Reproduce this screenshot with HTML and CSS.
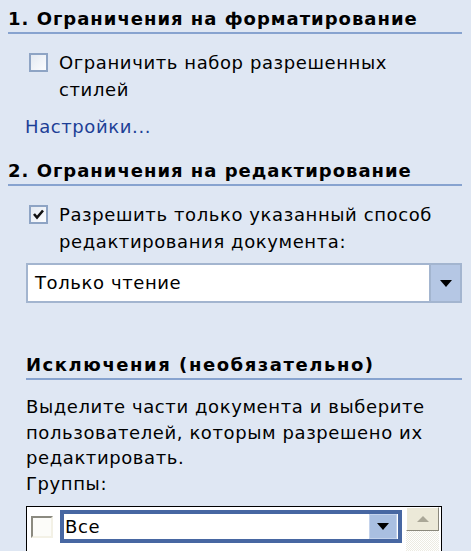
FILE: index.html
```html
<!DOCTYPE html>
<html lang="ru">
<head>
  <meta charset="UTF-8">
  <title>Ограничить форматирование и редактирование</title>
  <link rel="stylesheet" href="styles.css">
</head>
<body>
  <div class="pane">
    <h2 class="sect-title">1. Ограничения на форматирование</h2>
    <label class="check-row">
      <span class="cb"></span>
      <span class="cb-text">Ограничить набор разрешенных<br>стилей</span>
    </label>
    <a class="link" href="#">Настройки...</a>

    <h2 class="sect-title sect-two">2. Ограничения на редактирование</h2>
    <label class="check-row">
      <span class="cb">
        <svg width="13" height="11" viewBox="0 0 13 11"><path d="M2 5 L5 8.5 L11 1.5" fill="none" stroke="#111" stroke-width="2.6"/></svg>
      </span>
      <span class="cb-text">Разрешить только указанный способ<br>редактирования документа:</span>
    </label>
    <div class="select">
      <span class="select-value">Только чтение</span>
      <span class="select-btn">
        <svg width="12" height="7" viewBox="0 0 12 7"><path d="M0 0 H12 L6 7 Z" fill="#000"/></svg>
      </span>
    </div>

    <h3 class="sub-title">Исключения (необязательно)</h3>
    <p class="hint">Выделите части документа и выберите<br>пользователей, которым разрешено их<br>редактировать.</p>
    <div class="field-label">Группы:</div>
    <div class="listbox">
      <div class="list-row">
        <span class="cb-classic"></span>
        <div class="combo">
          <span class="combo-value">Все</span>
          <span class="combo-btn">
            <svg width="12" height="7" viewBox="0 0 12 7"><path d="M0 0 H12 L6 7 Z" fill="#000"/></svg>
          </span>
        </div>
      </div>
      <div class="scrollbar">
        <span class="sb-up">
          <svg width="12" height="6" viewBox="0 0 12 6"><path d="M0 6 H12 L6 0 Z" fill="#aaa797"/></svg>
        </span>
        <span class="sb-track"></span>
      </div>
    </div>
  </div>
</body>
</html>
```

FILE: styles.css
```css
* {
  box-sizing: border-box;
  margin: 0;
  padding: 0;
}
html, body {
  height: 100%;
}
body {
  background: #dfe7f3;
  font-family: "DejaVu Sans", sans-serif;
  font-size: 18px;
  letter-spacing: 0.6px;
  color: #000;
  overflow: hidden;
}
.pane {
  display: flex;
  flex-direction: column;
  padding: 0 9px 0 8px;
}
.sect-title {
  margin-top: 8px;
  font-size: 18px;
  font-weight: bold;
  letter-spacing: 1px;
  line-height: 22px;
  padding-bottom: 2px;
  border-bottom: 2px solid #87a3cf;
}
.sect-two {
  margin-top: 21px;
}
.check-row {
  display: flex;
  align-items: flex-start;
  gap: 11px;
  margin: 15px 0 0 21px;
}
.cb {
  flex: none;
  width: 19px;
  height: 19px;
  margin-top: 4px;
  border: 2px solid #8ea4c4;
  background: linear-gradient(135deg, #e4eaf2, #fbfcfe);
  display: flex;
  align-items: center;
  justify-content: center;
}
.cb-text {
  line-height: 27px;
}
.link {
  margin: 12px 0 0 17px;
  line-height: 24px;
  color: #1d3f96;
  text-decoration: none;
}
.select {
  display: flex;
  height: 40px;
  margin: 8px 0 0 18px;
  border: 2px solid #a3b5cf;
  background: #fff;
}
.select-value {
  flex: 1;
  padding-left: 7px;
  line-height: 36px;
}
.select-btn {
  width: 31px;
  background: #b5c7e4;
  border-left: 2px solid #a3b5cf;
  display: flex;
  align-items: center;
  justify-content: center;
}
.sub-title {
  margin: 51px 0 0 18px;
  font-size: 18px;
  font-weight: bold;
  letter-spacing: 1.55px;
  line-height: 22px;
  padding-bottom: 2px;
  border-bottom: 2px solid #87a3cf;
}
.hint {
  margin: 14px 0 0 18px;
  line-height: 25.5px;
}
.field-label {
  margin-left: 18px;
  line-height: 25.5px;
}
.listbox {
  display: flex;
  width: 416px;
  height: 60px;
  margin: 10px 0 0 18px;
  border: 1px solid #000;
  border-bottom: none;
  background: #fff;
  padding-right: 2px;
}
.list-row {
  flex: 1;
  display: flex;
  align-items: flex-start;
  padding: 3px 0 0 4px;
  gap: 7px;
}
.cb-classic {
  flex: none;
  width: 22px;
  height: 22px;
  margin-top: 6px;
  border: 2px solid #f3f1e6;
  border-top-color: #8b8a80;
  border-left-color: #8b8a80;
  background: #fcfcf9;
}
.combo {
  display: flex;
  width: 342px;
  height: 33px;
  border: 4px solid #4767a2;
  background: #fff;
  padding-right: 1px;
}
.combo-value {
  flex: 1;
  padding-left: 1px;
  line-height: 25px;
}
.combo-btn {
  width: 28px;
  background: #a9bfe1;
  border: 1px solid #c4d3ec;
  display: flex;
  align-items: center;
  justify-content: center;
}
.scrollbar {
  width: 33px;
  display: flex;
  flex-direction: column;
}
.sb-up {
  height: 24px;
  background: #ece9d8;
  border: 1px solid #fff;
  border-right-color: #8a887c;
  border-bottom-color: #8a887c;
  display: flex;
  align-items: center;
  justify-content: center;
}
.sb-track {
  flex: 1;
  background: repeating-conic-gradient(#ecebe2 0 25%, #fff 0 50%) 0 0 / 2px 2px;
}
```
